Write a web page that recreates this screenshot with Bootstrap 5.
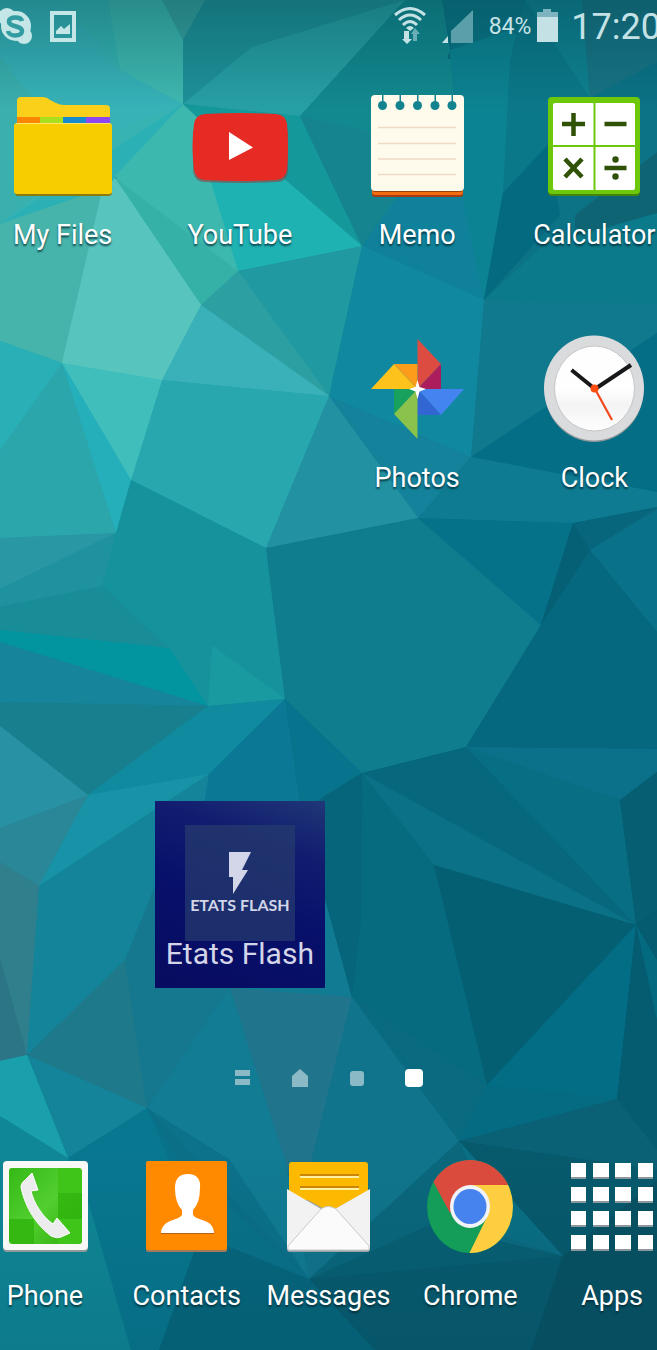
<!DOCTYPE html>
<html lang="en">
<head>
<meta charset="utf-8">
<meta name="viewport" content="width=device-width, initial-scale=1">
<title>Home screen</title>
<link href="https://cdn.jsdelivr.net/npm/bootstrap@5.3.0/dist/css/bootstrap.min.css" rel="stylesheet">
<style>
  body { font-family: Roboto, "Noto Sans", sans-serif; background: #0b6078; }
  .phone { isolation: isolate; }
  .wallpaper { z-index: -1; }
  .status { height: 54px; color: #c4e2e6; margin-right: -4px; line-height: 54px; }
  .status-end { gap: 15px; }
  .status-power { gap: 6px; }
  .status-clock { font-size: 36px; margin-left: -3px; }
  .status-battery { font-size: 23px; }
  .home-grid { display: grid; grid-template-columns: repeat(4, 1fr); grid-auto-rows: 243px; margin: 18px -26px 0; }
  .dock { display: grid; grid-template-columns: repeat(5, 1fr); margin: 68px -26px 0; padding-bottom: 36px; }
  .app { color: #fff; font-size: 27px; line-height: 36px; text-shadow: 0 2px 2px rgba(0, 40, 50, .8); white-space: nowrap; }
  .home-grid .app { padding-top: 18px; }
  .app svg { margin-bottom: 17px; }
  .dock .app svg { margin-bottom: 22px; }
  .app:hover { color: #fff; }
  .flash-tile { grid-column: 2; grid-row: 4; width: 170px; height: 187px; padding-top: 24px; color: #d3d5e8; background: linear-gradient(200deg, #203777 0%, #121d70 24%, #07106a 55%, #080c60 100%); }
  .flash-tile:hover { color: #d3d5e8; }
  .flash-logo { width: 110px; height: 116px; background: rgba(37, 60, 110, .72); font: 700 16px/20px Lato, sans-serif; padding-top: 26px; }
  .flash-name { font-size: 30px; line-height: 36px; margin-top: -5px; }
  .pager { margin-top: 24px; gap: 37px; }
  .pager button { width: 20px; height: 20px; }
</style>
</head>
<body>
<div class="phone position-relative overflow-hidden min-vh-100 d-flex flex-column">

  <svg class="wallpaper position-absolute top-0 start-0 w-100 h-100" viewBox="0 0 657 1350" preserveAspectRatio="none" aria-hidden="true">
    <defs>
      <linearGradient id="shade" x1="0" y1="0" x2="0" y2="1"><stop offset="0" stop-color="#003c46" stop-opacity=".36"/><stop offset="1" stop-color="#003c46" stop-opacity="0"/></linearGradient>
      <linearGradient id="low" x1="0" y1="0" x2="0" y2="1"><stop offset="0" stop-color="#003c50" stop-opacity="0"/><stop offset="1" stop-color="#003c50" stop-opacity=".16"/></linearGradient>
      <g id="facets">
        <!-- top left -->
        <path fill="#36b3b2" d="M0 0H205L183 40V104L115 178L0 224Z"/>
        <path fill="#3ab0ae" d="M0 58L47 98L115 130L0 224Z"/>
        <path fill="#37b3b8" d="M0 0H60L120 70L183 104L115 130H60L0 58Z"/>
        <path fill="#3fb9b1" d="M108 0H162L183 40V104L120 70Z"/>
        <path fill="#37a29f" d="M162 0H205L183 40Z"/>
        <path fill="#2bb0b5" d="M183 104L0 224V342L115 178Z"/>
        <path fill="#3db8af" d="M183 104L115 176L201 305L238 271L209 175Z"/>
        <path fill="#35b1a8" d="M115 178L238 271L201 305Z"/>
        <path fill="#46b4aa" d="M0 224L104 188L115 178L62 363L0 341Z"/>
        <path fill="#57c5be" d="M115 178L201 305L162 380L62 363L101 195Z"/>
        <path fill="#1f9299" d="M205 0H405L252 47L183 104V40Z"/>
        <path fill="#27a0a5" d="M183 104L252 47L405 0L300 116Z"/>
        <path fill="#159899" d="M183 104L300 116L362 246L270 182L200 140Z"/>
        <path fill="#3db8af" d="M183 104L200 120V150L209 175L190 170Z"/>
        <path fill="#1fb2b3" d="M200 140L280 175L362 246L238 271L209 175Z"/>
        <path fill="#12898f" d="M405 0L300 116L362 246L402 190L450 50L442 0Z"/>
        <path fill="#15848f" d="M300 116L372 132L400 190L362 246Z"/>
        <path fill="#0a7484" d="M442 0H525L590 98L503 193L452 50Z"/>
        <path fill="#12898f" d="M400 40L452 60L480 280L402 190Z"/>
        <path fill="#0c8392" d="M450 50L510 30L590 98L503 193L484 300L462 205Z"/>
        <path fill="#0b7889" d="M510 60L525 0L590 98L503 193Z"/>
        <path fill="#0f8190" d="M525 0H582L590 98Z"/>
        <path fill="#177384" d="M582 0H657V62L590 98Z"/>
        <path fill="#0c7286" d="M590 98L657 62V215L484 300L503 193Z"/>
        <path fill="#046a80" d="M503 193L548 145L560 215L484 300Z"/>
        <path fill="#0b7a8a" d="M657 213L540 248L484 300L657 304Z"/>
        <path fill="#0e6473" d="M657 152L575 215V236L657 213Z"/>
        <path fill="#10819a" d="M402 190L462 195L484 300L362 246Z"/>
        <!-- upper middle -->
        <path fill="#2199a1" d="M238 271L362 246L329 396Z"/>
        <path fill="#2c9fa2" d="M238 271L329 396L201 305Z"/>
        <path fill="#3ab1b8" d="M201 305L329 396L162 380Z"/>
        <path fill="#29a7ae" d="M162 380L329 396L266 548L131 480Z"/>
        <path fill="#3fbebb" d="M62 363L162 380L131 480Z"/>
        <path fill="#25afba" d="M62 363L131 480L116 533Z"/>
        <path fill="#2ba6ab" d="M62 363L116 533L0 538V341Z"/>
        <path fill="#29b0b7" d="M0 341L62 363L0 450Z"/>
        <path fill="#1089a0" d="M362 246L484 300L471 457L329 396Z"/>
        <path fill="#13829a" d="M329 396L471 457L418 518Z"/>
        <path fill="#2291a2" d="M329 396L418 518L266 548Z"/>
        <path fill="#10798e" d="M484 300L657 304V333L471 457Z"/>
        <path fill="#056e87" d="M471 457L657 333V492Z"/>
        <path fill="#0e7b92" d="M471 457L657 492V507L573 523L418 518Z"/>
        <!-- centre -->
        <path fill="#15929b" d="M131 480L266 548L285 699L208 706L169 648L102 586L116 533Z"/>
        <path fill="#2998a4" d="M0 538L116 533L0 589Z"/>
        <path fill="#1e929f" d="M116 533L102 586L0 607V589Z"/>
        <path fill="#188d98" d="M0 607L102 586L169 648L0 630Z"/>
        <path fill="#0295a0" d="M0 630L169 648L208 706L0 642Z"/>
        <path fill="#189aa0" d="M212 645L285 699L208 706Z"/>
        <path fill="#16849a" d="M0 642L208 706L0 702Z"/>
        <path fill="#187f8e" d="M0 702L208 706L88 795L0 726Z"/>
        <path fill="#0f7d8e" d="M266 548L418 518L541 625L466 747L362 773L285 699Z"/>
        <path fill="#06728a" d="M418 518L573 523L541 625Z"/>
        <path fill="#07667c" d="M573 523L657 507L590 550L541 625Z"/>
        <path fill="#0a718a" d="M657 510V632L590 550Z"/>
        <path fill="#06687e" d="M590 550L657 632V749L466 747L541 625Z"/>
        <path fill="#055f75" d="M573 523L590 550L541 625Z"/>
        <!-- left lower -->
        <path fill="#2991a4" d="M0 726L88 795L0 828Z"/>
        <path fill="#298797" d="M0 828L88 795L39 886L0 862Z"/>
        <path fill="#307f8d" d="M0 862L39 886L27 1055L0 960Z"/>
        <path fill="#2b7587" d="M0 958L27 1055L0 1061Z"/>
        <path fill="#108a9e" d="M208 706L285 699L209 774L88 795Z"/>
        <path fill="#1792a7" d="M88 795L209 774L39 886Z"/>
        <path fill="#13849a" d="M39 886L209 774L200 830L154 890L125 960L27 1055Z"/>
        <path fill="#0b7995" d="M285 699L362 773L300 815L200 830L209 774Z"/>
        <path fill="#07738c" d="M285 699L362 773L301 812Z"/>
        <path fill="#117b94" d="M154 890L200 815H310L324 895L352 997L230 988L147 1108L125 960Z"/>
        <path fill="#1e798a" d="M125 960L27 1055L147 1108Z"/>
        <path fill="#15788f" d="M125 960L154 888L230 988L147 1108Z"/>
        <path fill="#117c94" d="M230 988L285 1160L309 1279L147 1108Z"/>
        <path fill="#20748b" d="M230 988L352 997L309 1170L295 1200L285 1160Z"/>
        <path fill="#138499" d="M27 1055L147 1108L68 1158Z"/>
        <path fill="#1aa0ac" d="M0 1061L27 1055L68 1158L0 1116Z"/>
        <path fill="#0f8796" d="M0 1116L68 1158L88 1200L131 1350H0Z"/>
        <path fill="#087790" d="M68 1158L147 1108L309 1279L200 1260L159 1350H131L88 1200Z"/>
        <path fill="#0c718b" d="M147 1108L230 1160L309 1279L180 1160Z"/>
        <!-- right lower -->
        <path fill="#07687d" d="M362 773L466 747L636 925L434 865Z"/>
        <path fill="#0b718a" d="M466 747L657 749V772L620 800Z"/>
        <path fill="#086e84" d="M466 747L620 800L636 925Z"/>
        <path fill="#065e72" d="M620 800L657 772V910L636 925Z"/>
        <path fill="#0b7187" d="M362 773L636 925L434 865Z"/>
        <path fill="#076b80" d="M362 773L434 865L487 1085L352 997L324 895V796Z"/>
        <path fill="#06657a" d="M362 773L300 812L324 895L352 997L361 920Z"/>
        <path fill="#055f73" d="M434 865L636 925L487 1085Z"/>
        <path fill="#036d85" d="M636 925L617 1099L487 1085Z"/>
        <path fill="#055b70" d="M636 925L657 910V1150L617 1099Z"/>
        <path fill="#046a80" d="M636 925L657 960V1020Z"/>
        <path fill="#10758c" d="M352 997L459 1141L309 1279L295 1200L309 1170Z"/>
        <path fill="#0a6a80" d="M352 997L487 1085L459 1141Z"/>
        <path fill="#056b82" d="M487 1085L617 1099L459 1141Z"/>
        <path fill="#0a6074" d="M459 1141L617 1099L657 1150V1170Z"/>
        <path fill="#07596c" d="M459 1141L657 1170V1350H531L563 1256Z"/>
        <path fill="#0b6f84" d="M459 1141L563 1256L500 1235Z"/>
        <path fill="#0a677c" d="M459 1141L309 1279L500 1235Z"/>
        <path fill="#085a6d" d="M309 1279L563 1256L531 1350H375Z"/>
        <path fill="#085f73" d="M309 1279L430 1225L563 1256Z"/>
        <path fill="#075163" d="M563 1256L657 1180V1350H531Z"/>
        <path fill="#06667c" d="M200 1235L309 1279L375 1350H159Z"/>
        <path fill="#0c6c83" d="M147 1108L309 1279L200 1235Z" opacity=".45"/>
      </g>
    </defs>
    <rect width="657" height="1350" fill="#0b6a80"/>
    <!-- a hard-edged copy underneath closes the seams between facets -->
    <g shape-rendering="crispEdges"><use href="#facets"/></g>
    <use href="#facets"/>
    <rect width="657" height="110" fill="url(#shade)"/>
    <rect y="1150" width="657" height="200" fill="url(#low)"/>
  </svg>

  <header class="status d-flex align-items-center text-nowrap">
    <svg width="34" height="54" viewBox="0 0 34 54" role="img" aria-label="Skype">
      <g fill="#c4e6e6"><circle cx="16" cy="26" r="15"/><circle cx="7" cy="17" r="9"/><circle cx="24" cy="36" r="8"/></g>
      <path d="M22 21C21 16.500 9 16 9 21.500C9 27.500 22 25 22 31C22 37 9 37 8 31" fill="none" stroke="#319da2" stroke-width="4.500"/>
    </svg>
    <svg class="ms-3" width="27" height="54" viewBox="50 0 27 54" role="img" aria-label="Picture">
      <path fill="none" stroke="#c4e6e6" stroke-width="4" d="M52 13H74V40H52Z"/>
      <path fill="#c4e6e6" d="M56 34V31L61 26L64 29L70 24V34Z"/>
    </svg>
    <div class="status-end ms-auto d-flex align-items-center">
      <svg width="34" height="54" viewBox="395 0 34 54" role="img" aria-label="Wi-Fi">
        <g fill="none" stroke="#c4e2e6" stroke-width="3"><path d="M397 15Q412 2 427 15"/><path d="M401 20Q412 10 423 20"/><path d="M405 25Q412 18 419 25"/></g>
        <path fill="#c4e2e6" d="M408 28Q412 24 416 28L412 31ZM406 31H411V39H414L409 44L404 39H406Z"/>
        <path fill="#6aaeb7" d="M415 41H419V34H422L417 28L413 34H415Z"/>
      </svg>
      <svg width="32" height="54" viewBox="444 0 32 54" role="img" aria-label="Signal">
        <path fill="#5b9faa" d="M453 31L475 10V43H453Z"/><path fill="#c4e2e6" d="M444 43L450 36V43Z"/>
      </svg>
      <div class="status-power d-flex align-items-center">
        <span class="status-battery">84%</span>
        <svg width="22" height="54" viewBox="540 0 22 54" role="img" aria-label="Battery">
          <path fill="#7db4bf" d="M546 9H554V12H561V18H540V12H546Z"/><path fill="#c4e2e6" d="M540 17H561V42H540Z"/>
        </svg>
      </div>
      <time class="status-clock">17:20</time>
    </div>
  </header>

  <main class="home-grid">
    <a href="#" class="app d-flex flex-column align-items-center text-decoration-none">
      <svg width="100" height="110" viewBox="13 90 100 110" aria-hidden="true">
        <path fill="#8d7a0c" d="M15 130H112V192Q112 196 108 196H18Q15 196 15 192Z"/>
        <path fill="#fad01a" d="M17 125V101Q17 97 21 97H43Q47 97 50 100L56 103Q60 105 64 105H106Q110 105 110 109V125Z"/>
        <path fill="#fb8604" d="M17 117H40V123H17Z"/><path fill="#a9df1c" d="M40 117H63V123H40Z"/><path fill="#178bce" d="M63 117H86V123H63Z"/><path fill="#8e47ee" d="M86 117H110V123H86Z"/>
        <rect x="14" y="123" width="98" height="71" rx="3" fill="#f7cd00"/><path stroke="#ffe46a" d="M16 123.500H110"/>
      </svg>My Files</a>
    <a href="#" class="app d-flex flex-column align-items-center text-decoration-none">
      <svg width="100" height="110" viewBox="190 90 100 110" aria-hidden="true">
        <path fill="#87453f" opacity=".6" d="M193 130H288V170Q287 182 277 182Q240 184 205 182Q194 182 193 170Z"/>
        <path fill="#e62b25" d="M205 114Q240 112 276 114Q286 115 287 124Q289 147 287 169Q286 179 276 180Q240 182 205 180Q195 179 194 169Q191 147 194 124Q195 115 205 114Z"/>
        <path fill="#fff" d="M229 132L253 147.500L229 160Z"/>
      </svg>YouTube</a>
    <a href="#" class="app d-flex flex-column align-items-center text-decoration-none">
      <svg width="100" height="110" viewBox="367 90 100 110" aria-hidden="true">
        <rect x="372" y="170" width="91" height="27" rx="3" fill="#a63b13"/><rect x="372" y="170" width="91" height="25" rx="3" fill="#f36c10"/><rect x="372" y="168" width="91" height="24" rx="3" fill="#95400f"/>
        <rect x="371" y="95" width="93" height="96" rx="4" fill="#fefbec"/>
        <path stroke="#f0dac6" stroke-width="1.500" d="M378 127.500H456M378 143.500H456M378 159H456M378 174.500H456"/>
        <g fill="#12838f"><circle cx="382.500" cy="105.500" r="4.500"/><circle cx="400" cy="105.500" r="4.500"/><circle cx="417.500" cy="105.500" r="4.500"/><circle cx="435" cy="105.500" r="4.500"/><circle cx="452" cy="105.500" r="4.500"/><path d="M382 95h1.500v8H382zM399.500 95h1.500v8H399.500zM417 95h1.500v8H417zM434.500 95H436v8H434.500zM451.500 95H453v8H451.500z"/></g>
      </svg>Memo</a>
    <a href="#" class="app d-flex flex-column align-items-center text-decoration-none">
      <svg width="100" height="110" viewBox="544 90 100 110" aria-hidden="true">
        <rect x="548" y="100" width="92" height="96" rx="4" fill="#45840c"/><rect x="548" y="97" width="92" height="97" rx="4" fill="#6dc80c"/>
        <rect x="553" y="103" width="82" height="87" rx="2" fill="#fff"/>
        <path stroke="#6dc80c" stroke-width="2" d="M594.500 103V190M553 146H635"/>
        <path stroke="#2f5206" stroke-width="4.500" d="M562 124H585M573.500 113V136M604.500 124H626.500M565 159L582 177M582 159L565 177M604.500 168H626.500"/>
        <circle cx="615.500" cy="159.500" r="3.200" fill="#2f5206"/><circle cx="615.500" cy="176.500" r="3.200" fill="#2f5206"/>
      </svg>Calculator</a>

    <a href="#" class="app d-flex flex-column align-items-center text-decoration-none" style="grid-column: 3">
      <svg width="100" height="110" viewBox="367 333 100 110" aria-hidden="true">
        <path fill="#dd4c40" d="M417.500 339L441 364L417.500 389Z"/><path fill="#ab1d5d" d="M441 364V389H417.500Z"/>
        <path fill="#fdc21b" d="M371 389L394 364L417.500 389Z"/><path fill="#fb9c1b" d="M394 364H417.500V389Z"/>
        <path fill="#4384f1" d="M417.500 389H464L441 415Z"/><path fill="#3266d2" d="M417.500 389L441 415H417.500Z"/>
        <path fill="#17a15d" d="M394 389H417.500L394 414Z"/><path fill="#8ac24b" d="M417.500 389V439L394 414Z"/>
        <path fill="#fff" d="M417.500 380L419.500 387L426 389L419.500 391.500L417.500 399L415.500 391.500L409 389L415.500 387Z"/>
      </svg>Photos</a>
    <a href="#" class="app d-flex flex-column align-items-center text-decoration-none">
      <svg width="100" height="110" viewBox="544 333 100 110" aria-hidden="true">
        <defs><linearGradient id="face" x1="0" y1="0" x2="0" y2="1"><stop offset=".5" stop-color="#fefefe"/><stop offset=".7" stop-color="#f4f4f5"/><stop offset="1" stop-color="#fefefe"/></linearGradient></defs>
        <ellipse cx="594" cy="390" rx="49.500" ry="52" fill="#8d9799"/><ellipse cx="594" cy="388" rx="50" ry="52.500" fill="#dadbdd"/><ellipse cx="594.500" cy="388.500" rx="40" ry="42.500" fill="url(#face)" stroke="#c4c6c8"/>
        <g stroke="#17181a" stroke-width="4"><path d="M571.500 370L595 389"/><path d="M595 389L631 365"/></g><path stroke="#f2481c" stroke-width="2.200" d="M595 389L612 420"/><circle cx="594.500" cy="388.500" r="4" fill="#ff4c10"/>
      </svg>Clock</a>

    <a href="#" class="flash-tile mx-auto d-flex flex-column align-items-center text-decoration-none text-nowrap">
      <span class="flash-logo d-flex flex-column align-items-center">
        <svg width="24" height="44" viewBox="227 851 24 44" aria-hidden="true"><path fill="#d3d5e8" d="M228 852H250L241 870H247L232 894V877H228Z"/></svg>
        <span>ETATS FLASH</span>
      </span>
      <span class="flash-name">Etats Flash</span>
    </a>
  </main>

  <nav class="pager d-flex justify-content-center" aria-label="Pages">
    <button type="button" class="btn p-0 border-0 d-flex" aria-label="Briefing"><svg width="20" height="20" aria-hidden="true"><path fill="#8bbac6" d="M2 2H17V8H2ZM2 11H17V17H2Z"/></svg></button>
    <button type="button" class="btn p-0 border-0 d-flex" aria-label="Home"><svg width="20" height="20" aria-hidden="true"><path fill="#8bbac6" d="M2 8L10 1L18 8V19H2Z"/></svg></button>
    <button type="button" class="btn p-0 border-0 d-flex" aria-label="Page 2"><svg width="20" height="20" aria-hidden="true"><rect x="3" y="3" width="14" height="15" rx="3" fill="#8bbac6"/></svg></button>
    <button type="button" class="btn p-0 border-0 d-flex" aria-label="Page 3"><svg width="20" height="20" aria-hidden="true"><rect x="1" y="1" width="18" height="18" rx="4" fill="#fff"/></svg></button>
  </nav>

  <footer class="dock">
    <a href="#" class="app d-flex flex-column align-items-center text-decoration-none">
      <svg width="100" height="100" viewBox="-5 1156 100 100" aria-hidden="true">
        <defs><linearGradient id="green" x1="0" y1="0" x2="1" y2="1"><stop offset="0" stop-color="#35b916"/><stop offset=".5" stop-color="#52cf30"/><stop offset="1" stop-color="#2dad0b"/></linearGradient></defs>
        <rect x="3" y="1163" width="85" height="89" rx="4" fill="#8e9b98"/><rect x="3" y="1161" width="85" height="89" rx="4" fill="#f8f8f7"/>
        <rect x="9" y="1168" width="73" height="76" rx="3" fill="url(#green)"/>
        <path fill="#3fc41a" d="M58 1168H79L82 1171V1193H58ZM58 1219H82V1241L79 1244H58Z"/><path fill="#2fb30c" opacity=".8" d="M9 1219H34V1244H12L9 1241ZM58 1193H82V1219H58Z"/>
        <path fill="#ececee" stroke="#fff" d="M32 1173L38 1190L31 1191C34 1204 43 1217 53 1224L57 1218L70 1233L61 1237Q57 1239 51 1236C33 1222 24 1203 21 1187Q21 1184 23 1182Z"/>
      </svg>Phone</a>
    <a href="#" class="app d-flex flex-column align-items-center text-decoration-none">
      <svg width="100" height="100" viewBox="137 1156 100 100" aria-hidden="true">
        <rect x="146" y="1164" width="81" height="88" rx="2" fill="#a27a58"/><rect x="146" y="1161" width="81" height="89" rx="2" fill="#ff8a00"/>
        <path fill="#b3611a" d="M161 1232H214V1234H161Z"/>
        <path fill="#fff" d="M188 1174C197 1174 201 1180 200 1188Q200 1203 193 1210V1215C197 1221 214 1219 214 1233H161C162 1219 178 1221 182 1215V1210Q175 1203 175 1188C175 1178 180 1174 188 1174Z"/>
      </svg>Contacts</a>
    <a href="#" class="app d-flex flex-column align-items-center text-decoration-none">
      <svg width="100" height="100" viewBox="278 1156 100 100" aria-hidden="true">
        <rect x="289" y="1162" width="79" height="60" rx="3" fill="#fcb900"/>
        <path stroke="#ca850b" stroke-width="2" d="M300 1175H359M300 1187H359"/><path stroke="#fff1a0" stroke-width="2" d="M300 1177H359M300 1189H359"/>
        <path fill="#9ba2a5" d="M287 1200V1249Q287 1252 290 1252H367Q370 1252 370 1249V1200Z"/>
        <path fill="#fcb900" d="M289 1190H368L330 1212Z"/>
        <path fill="#f2f2f3" d="M287 1189L328 1213L370 1189V1247Q370 1250 367 1250H290Q287 1250 287 1247Z"/>
        <path fill="#fbfbfc" stroke="#c8cbcd" d="M288 1246L321 1209Q328 1204 336 1209L369 1246V1250H288Z"/>
      </svg>Messages</a>
    <a href="#" class="app d-flex flex-column align-items-center text-decoration-none">
      <svg width="100" height="100" viewBox="420 1156 100 100" aria-hidden="true">
        <clipPath id="disc"><ellipse cx="470" cy="1206.500" rx="43" ry="46.500"/></clipPath>
        <g clip-path="url(#disc)"><rect x="420" y="1156" width="100" height="100" fill="#139d58"/><path fill="#ffcd40" d="M470 1185H520V1256H468L487 1217Z"/><path fill="#da4a3d" d="M420 1156H520V1185H470L450 1213L434 1183Z"/></g>
        <ellipse cx="470" cy="1206.500" rx="20" ry="21.500" fill="#f1f3f6"/><ellipse cx="470" cy="1206.500" rx="16.500" ry="17.500" fill="#4683ef"/>
      </svg>Chrome</a>
    <a href="#" class="app d-flex flex-column align-items-center text-decoration-none">
      <svg width="100" height="100" viewBox="562 1156 100 100" aria-hidden="true">
        <defs><g id="dots"><path fill="#8c989c" d="M571 3h15v13h-15zM593 3h16v13h-16zM615 3h16v13h-16zM638 3h15v13h-15z"/><path fill="#fff" d="M571 0h15v14h-15zM593 0h16v14h-16zM615 0h16v14h-16zM638 0h15v14h-15z"/></g></defs>
        <use href="#dots" y="1163"/><use href="#dots" y="1187"/><use href="#dots" y="1211"/><use href="#dots" y="1235"/>
      </svg>Apps</a>
  </footer>
</div>
<script src="https://cdn.jsdelivr.net/npm/bootstrap@5.3.0/dist/js/bootstrap.bundle.min.js"></script>
</body>
</html>
